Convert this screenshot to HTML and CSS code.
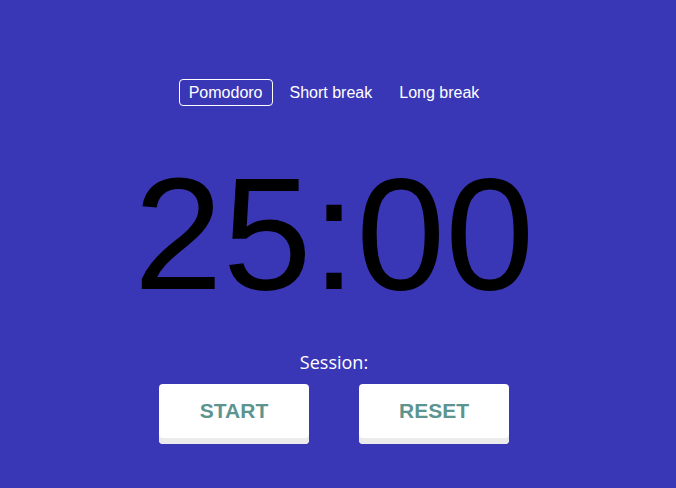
FILE: index.html
```html
<!DOCTYPE html>
<html>
<head>
<meta charset="utf-8">
<link rel="stylesheet" href="styles.css">
</head>
<body>
<main class="app">
  <nav class="modes">
    <button class="mode active">Pomodoro</button>
    <button class="mode">Short break</button>
    <button class="mode">Long break</button>
  </nav>
  <div class="timer">25:00</div>
  <div class="session">Session:</div>
  <div class="controls">
    <button class="ctrl">START</button>
    <button class="ctrl">RESET</button>
  </div>
</main>
</body>
</html>
```
FILE: styles.css
```css
html, body {
  margin: 0;
  padding: 0;
  height: 100%;
}
body {
  background: #3a37b6;
  font-family: "Liberation Sans", Arial, sans-serif;
}
.app {
  display: flex;
  flex-direction: column;
  align-items: center;
  padding-top: 79px;
  padding-right: 8px;
}
.modes {
  display: flex;
}
.mode {
  background: none;
  border: 1px solid transparent;
  border-radius: 4px;
  color: #fff;
  font-family: "Liberation Sans", Arial, sans-serif;
  font-size: 16px;
  height: 27px;
  padding: 0 9px;
  margin-right: 7px;
  cursor: pointer;
}
.mode:last-child { margin-right: 0; }
.mode.active {
  border-color: #fff;
}
.timer {
  font-family: "Liberation Sans", Arial, sans-serif;
  font-size: 160px;
  line-height: 1;
  color: #000;
  margin-top: 48px;
}
.session {
  font-family: "Open Sans", "Noto Sans", sans-serif;
  color: #fff;
  font-size: 18px;
  margin-top: 36px;
  line-height: 24px;
}
.controls {
  display: flex;
  gap: 50px;
  margin-top: 10px;
}
.ctrl {
  width: 150px;
  height: 60px;
  background: #fff;
  border: none;
  border-radius: 4px;
  box-shadow: inset 0 -6px 0 #ebebeb;
  color: #5d9490;
  font-family: "Liberation Sans", Arial, sans-serif;
  font-weight: bold;
  font-size: 21px;
  padding: 0 0 6px;
  cursor: pointer;
}
```
